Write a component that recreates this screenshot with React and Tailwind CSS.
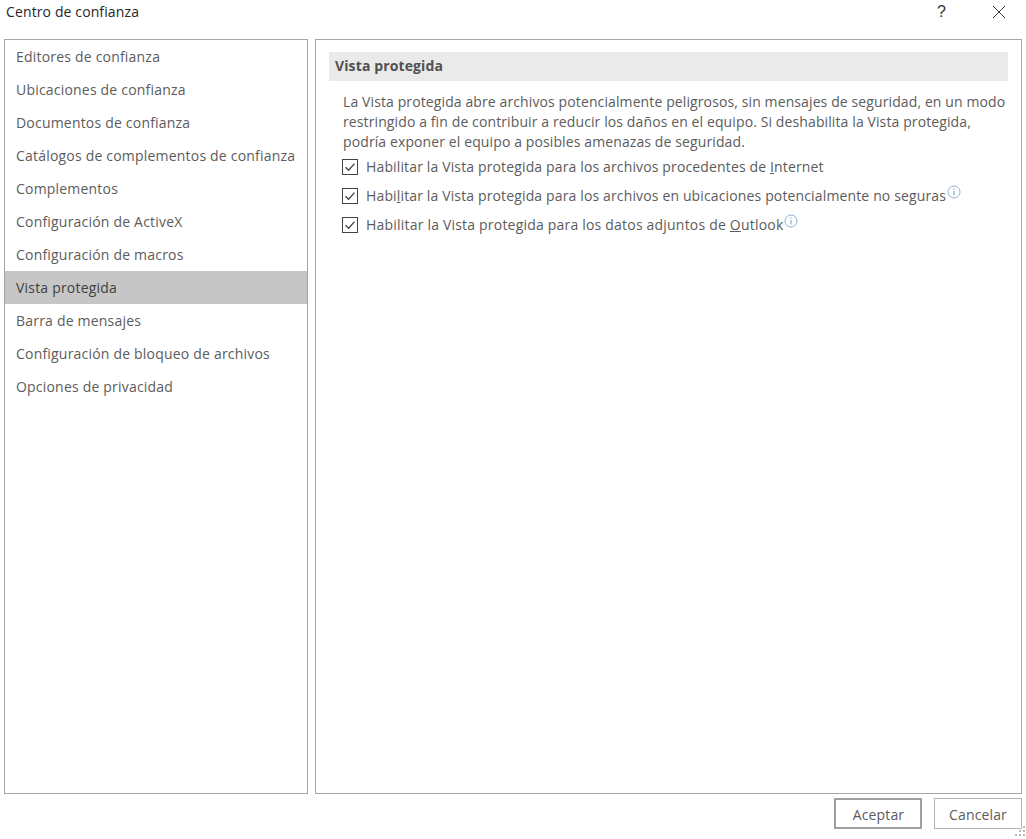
const items = [
  "Editores de confianza",
  "Ubicaciones de confianza",
  "Documentos de confianza",
  "Catálogos de complementos de confianza",
  "Complementos",
  "Configuración de ActiveX",
  "Configuración de macros",
  "Vista protegida",
  "Barra de mensajes",
  "Configuración de bloqueo de archivos",
  "Opciones de privacidad",
];

function Check() {
  return (
    <svg width="16" height="16" viewBox="0 0 16 16" className="shrink-0 block">
      <rect x="0.5" y="0.5" width="15" height="15" fill="#fff" stroke="#444" />
      <path d="M3.5 8.2 L6.6 11.2 L12.5 4.6" fill="none" stroke="#444" strokeWidth="1.3" />
    </svg>
  );
}

function Info() {
  return (
    <svg width="14" height="14" viewBox="0 0 14 14" className="shrink-0 block mb-[8px] ml-[1px]">
      <circle cx="7" cy="7" r="6" fill="none" stroke="#8fb4d6" strokeWidth="1" />
      <path d="M7 6v4.5M7 3.5v1.2" stroke="#6f9cc6" strokeWidth="1" />
    </svg>
  );
}

function CheckRow({ children, info, track }) {
  return (
    <div className="flex items-center pl-[13px] h-[29px]">
      <Check />
      <span className={`ml-[8px] whitespace-nowrap ${track}`}>{children}</span>
      {info && <Info />}
    </div>
  );
}

export default function App() {
  return (
    <div className="w-[1026px] h-[839px] bg-white flex flex-col overflow-hidden text-[14px] text-[#5c5c5c] font-['Open_Sans',sans-serif] relative">
      <div className="h-[39px] flex items-start justify-between shrink-0">
        <span className="ml-[6px] mt-[1px] text-[#262626] tracking-[0.12px]">Centro de confianza</span>
        <div className="flex items-center h-[24px]">
          <span className="text-[16px] text-[#333] mr-[46px] font-['Liberation_Sans',sans-serif]">?</span>
          <svg width="14" height="14" viewBox="0 0 14 14" className="mr-[20px]">
            <path d="M1 1L13 13M13 1L1 13" stroke="#333" strokeWidth="1" fill="none" />
          </svg>
        </div>
      </div>

      <div className="flex h-[755px] shrink-0 pl-[4px] pr-[4px] gap-[7px]">
        <div className="w-[304px] border border-[#a6a6a6] tracking-[0.2px]">
          {items.map((t) => (
            <div
              key={t}
              className={`h-[33px] flex items-center pl-[11px] whitespace-nowrap ${t === "Vista protegida" ? "bg-[#c6c6c6] text-[#404040]" : ""}`}
            >
              {t}
            </div>
          ))}
        </div>
        <div className="flex-1 border border-[#a6a6a6] pt-[12px] px-[13px]">
          <div className="h-[29px] bg-[#eaeaea] flex items-center pl-[6px] pb-[2px] font-bold text-[#505050] tracking-[0.12px]">
            Vista protegida
          </div>
          <div className="pl-[14px] pt-[11px] leading-[20px] whitespace-nowrap tracking-[0.11px]">
            <div>La Vista protegida abre archivos potencialmente peligrosos, sin mensajes de seguridad, en un modo</div>
            <div>restringido a fin de contribuir a reducir los daños en el equipo. Si deshabilita la Vista protegida,</div>
            <div>podría exponer el equipo a posibles amenazas de seguridad.</div>
          </div>
          <div>
            <CheckRow track="tracking-[0.14px]">
              Habilitar la Vista protegida para los archivos procedentes de <span className="underline">I</span>nternet
            </CheckRow>
            <CheckRow info track="tracking-[0.14px]">
              Habi<span className="underline">l</span>itar la Vista protegida para los archivos en ubicaciones potencialmente no seguras
            </CheckRow>
            <CheckRow info track="tracking-[0.2px]">
              Habilitar la Vista protegida para los datos adjuntos de <span className="underline">O</span>utlook
            </CheckRow>
          </div>
        </div>
      </div>

      <div className="flex justify-end gap-[12px] pr-[4px] pt-[4px] tracking-[0.14px]">
        <button className="w-[88px] h-[31px] border-2 border-[#a0a0a0] bg-white text-[#5c5c5c] pl-[1px] pt-[1px]">Aceptar</button>
        <button className="w-[88px] h-[31px] border border-[#b4b4b4] bg-white text-[#5c5c5c] pt-[1px]">Cancelar</button>
      </div>

      <svg width="12" height="12" viewBox="0 0 12 12" className="absolute right-[0px] bottom-[2px]">
        <g fill="#b8b8b8">
          <rect x="9" y="1" width="2" height="2" />
          <rect x="5" y="5" width="2" height="2" />
          <rect x="9" y="5" width="2" height="2" />
          <rect x="1" y="9" width="2" height="2" />
          <rect x="5" y="9" width="2" height="2" />
          <rect x="9" y="9" width="2" height="2" />
        </g>
      </svg>
    </div>
  );
}
